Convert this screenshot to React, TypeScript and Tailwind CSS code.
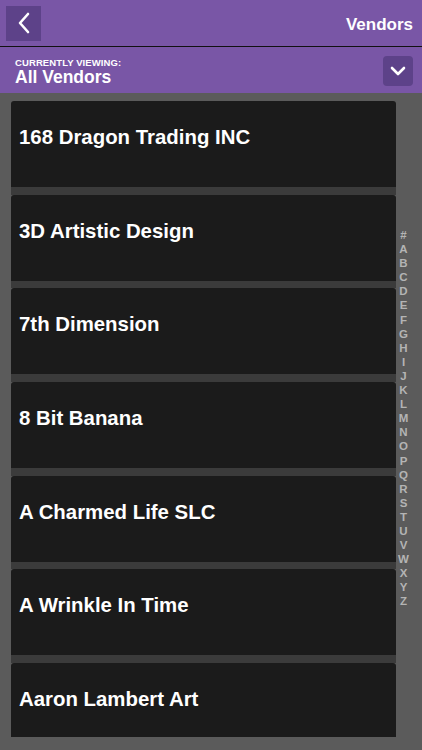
import React from "react";

const vendors = [
  "168 Dragon Trading INC",
  "3D Artistic Design",
  "7th Dimension",
  "8 Bit Banana",
  "A Charmed Life SLC",
  "A Wrinkle In Time",
  "Aaron Lambert Art",
];

const letters = "#ABCDEFGHIJKLMNOPQRSTUVWXYZ".split("");

export default function App() {
  return (
    <div
      className="w-[422px] h-[750px] overflow-hidden bg-[#5b5b5b] flex flex-col"
      style={{ fontFamily: '"Liberation Sans", Arial, sans-serif' }}
    >
      {/* Top bar */}
      <div className="h-[46px] bg-[#7956a6] flex items-center justify-between pl-[6px] pr-[9px] shrink-0">
        <div className="w-[35px] h-[35px] bg-[#5d4289] flex items-center justify-center">
          <svg width="14" height="22" viewBox="0 0 14 22" fill="none">
            <path d="M11 2L3 11L11 20" stroke="white" strokeWidth="2.6" strokeLinecap="round" strokeLinejoin="round" />
          </svg>
        </div>
        <div className="text-white font-bold text-[17px] mt-[3px]">Vendors</div>
      </div>
      <div className="h-[1px] bg-[#111] shrink-0" />
      {/* Sub header */}
      <div className="h-[46px] bg-[#7956a6] flex items-center justify-between pl-[15px] pr-[9px] shrink-0">
        <div className="flex flex-col text-white leading-none pt-[4px]">
          <div className="text-[9.5px] font-bold tracking-[0.1px]">CURRENTLY VIEWING:</div>
          <div className="text-[17.5px] font-bold mt-[1px]">All Vendors</div>
        </div>
        <div className="w-[30px] h-[30px] bg-[#5d4289] rounded-[4px] flex items-center justify-center mt-[2px]">
          <svg width="16" height="10" viewBox="0 0 16 10" fill="none">
            <path d="M2 2L8 8L14 2" stroke="white" strokeWidth="2.6" strokeLinecap="round" strokeLinejoin="round" />
          </svg>
        </div>
      </div>
      {/* Content */}
      <div className="flex pt-[8px]">
        <div className="ml-[11px] w-[385px] h-[636px] overflow-hidden flex flex-col">
          {vendors.map((v) => (
            <div key={v} className="shrink-0">
              <div className="h-[86px] bg-[#1b1b1b] rounded-t-[3px] pl-[8px] pt-[24px]">
                <div className="text-white font-bold text-[20.4px] leading-[24px]">{v}</div>
              </div>
              <div className="h-[7.7px] bg-[#3b3b3b]" />
            </div>
          ))}
        </div>
        <div className="w-[15px] flex flex-col items-center pt-[127px]">
          {letters.map((l) => (
            <div key={l} className="h-[14.1px] text-[11.5px] leading-[14.1px] text-[#b4b4b4] font-bold">
              {l}
            </div>
          ))}
        </div>
      </div>
    </div>
  );
}
